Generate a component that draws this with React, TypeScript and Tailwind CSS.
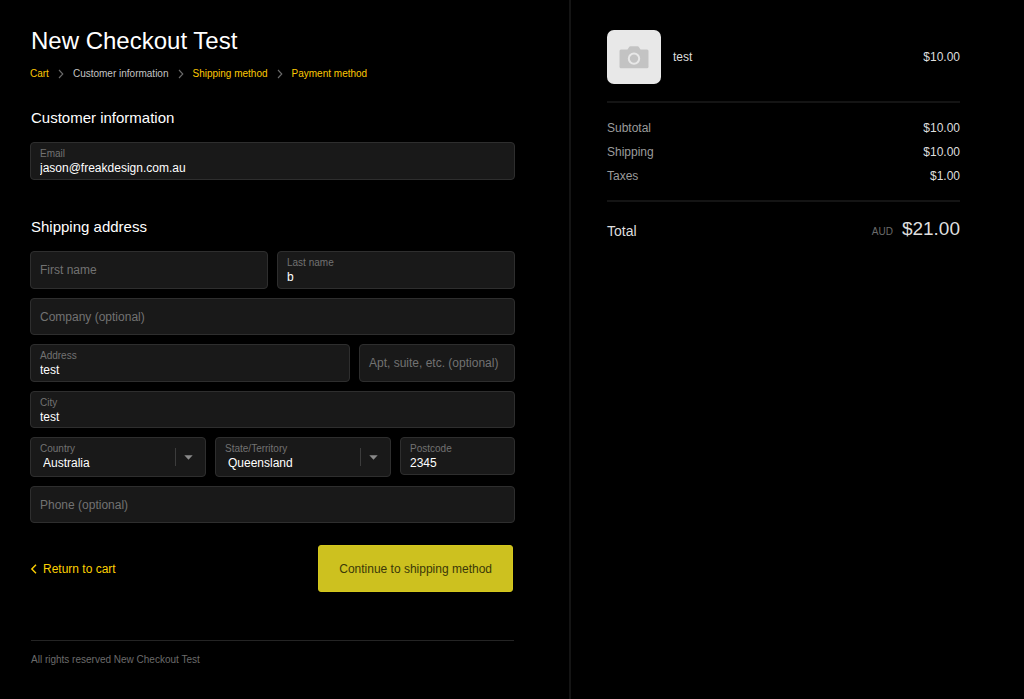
import { useState, type ReactNode } from "react";

const box = "relative flex flex-col rounded-[4px] border border-[#2e2e2e] bg-[#191919]";

type FieldProps = {
  id: string;
  label: string;
  initial?: string;
  type?: string;
  height?: string;
};

function Field({ id, label, initial = "", type = "text", height = "h-[38px]" }: FieldProps) {
  const [value, setValue] = useState(initial);
  const filled = value !== "";
  return (
    <div className={`${box} ${height} ${filled ? "pt-[5px]" : ""}`}>
      <label
        htmlFor={id}
        className={
          filled
            ? "px-[9px] text-[10px] leading-[12px] text-[#727272]"
            : "pointer-events-none absolute inset-0 flex items-center px-[9px] text-[12px] leading-4 whitespace-nowrap text-[#727272]"
        }
      >
        {label}
      </label>
      <input
        id={id}
        type={type}
        value={value}
        onChange={(e) => setValue(e.target.value)}
        className={`${filled ? "h-4" : "h-full"} block w-full min-w-0 bg-transparent px-[9px] text-[12px] leading-4 text-white outline-none`}
      />
    </div>
  );
}

function SelectField({ id, label, options }: { id: string; label: string; options: string[] }) {
  return (
    <div className={`${box} h-10 pt-[5px]`}>
      <label htmlFor={id} className="px-[9px] text-[10px] leading-[12px] text-[#727272]">
        {label}
      </label>
      <select
        id={id}
        className="block h-4 w-full appearance-none bg-transparent pr-8 pl-3 text-[12px] leading-4 text-white outline-none"
      >
        {options.map((o) => (
          <option key={o} className="bg-[#191919]">
            {o}
          </option>
        ))}
      </select>
      <span className="pointer-events-none absolute inset-y-0 right-3 flex items-center gap-2">
        <span className="h-[18px] w-px bg-[#3c3c3c]" />
        <svg width="9" height="5" viewBox="0 0 9 5" aria-hidden="true">
          <path d="M0.3 0.3H8.7L4.5 4.7Z" fill="#8a8a8a" />
        </svg>
      </span>
    </div>
  );
}

function Separator() {
  return (
    <svg width="6" height="10" viewBox="0 0 6 10" fill="none" aria-hidden="true">
      <path d="M1 1L4.8 5L1 9" stroke="#6b6b6b" strokeWidth="1.1" />
    </svg>
  );
}

function Crumb({ children }: { children: ReactNode }) {
  return (
    <a href="#" className="text-[#fdc803]">
      {children}
    </a>
  );
}

function Heading({ children }: { children: ReactNode }) {
  return <h2 className="px-px text-[15px] leading-5 text-white">{children}</h2>;
}

function PriceRow({ label, price }: { label: string; price: string }) {
  return (
    <div className="flex justify-between">
      <dt className="text-[#9b9b9b]">{label}</dt>
      <dd className="text-[#dedede]">{price}</dd>
    </div>
  );
}

export default function App() {
  return (
    <div className="grid min-h-screen grid-cols-[571fr_453fr] bg-black font-['Liberation_Sans',Arial,sans-serif] text-[12px]">
      <main className="border-r-2 border-[#141414] pt-[26px] pr-[54px] pl-[30px]">
        <header>
          <h1 className="px-px text-[24px] leading-[30px] text-white">New Checkout Test</h1>
          <nav
            aria-label="Breadcrumb"
            className="mt-[10px] flex items-center gap-[9px] text-[10px] leading-4 whitespace-nowrap"
          >
            <Crumb>Cart</Crumb>
            <Separator />
            <span className="text-[#c4c4c4]">Customer information</span>
            <Separator />
            <Crumb>Shipping method</Crumb>
            <Separator />
            <Crumb>Payment method</Crumb>
          </nav>
        </header>

        <form onSubmit={(e) => e.preventDefault()}>
          <section className="mt-[26px]">
            <Heading>Customer information</Heading>
            <div className="mt-[14px]">
              <Field id="email" label="Email" type="email" initial="jason@freakdesign.com.au" />
            </div>
          </section>

          <section className="mt-[37px]">
            <Heading>Shipping address</Heading>
            <div className="mt-[14px] grid gap-[9px]">
              <div className="grid grid-cols-2 gap-[9px]">
                <Field id="first" label="First name" />
                <Field id="last" label="Last name" initial="b" />
              </div>
              <Field id="company" label="Company (optional)" height="h-[37px]" />
              <div className="grid grid-cols-[320fr_156fr] gap-[9px]">
                <Field id="address" label="Address" initial="test" />
                <Field id="apt" label="Apt, suite, etc. (optional)" />
              </div>
              <Field id="city" label="City" initial="test" height="h-[37px]" />
              <div className="grid grid-cols-[176fr_176fr_115fr] items-start gap-[9px]">
                <SelectField id="country" label="Country" options={["Australia", "New Zealand"]} />
                <SelectField
                  id="state"
                  label="State/Territory"
                  options={["Queensland", "New South Wales", "Victoria"]}
                />
                <Field id="postcode" label="Postcode" initial="2345" />
              </div>
              <Field id="phone" label="Phone (optional)" type="tel" height="h-[37px]" />
            </div>
          </section>

          <div className="mt-[22px] flex items-center justify-between pr-0.5">
            <a href="#" className="flex items-center gap-[5px] text-[#fdd003]">
              <svg width="8" height="10" viewBox="0 0 8 10" fill="none" aria-hidden="true">
                <path d="M6 0.8L1.8 5L6 9.2" stroke="currentColor" strokeWidth="1.4" />
              </svg>
              Return to cart
            </a>
            <button
              type="submit"
              className="h-[47px] rounded-[3px] border border-[#d3c71c] bg-[#cdc11f] px-5 text-[12px] text-[#3b3808]"
            >
              Continue to shipping method
            </button>
          </div>
        </form>

        <footer className="mx-px mt-12 border-t border-[#242424] pt-[11px] text-[10px] leading-4 text-[#6b6b6b]">
          All rights reserved New Checkout Test
        </footer>
      </main>

      <aside aria-label="Order summary" className="pt-[30px] pr-16 pl-9">
        <div className="flex items-center border-b-2 border-[#141414] pb-[17px] text-[#dedede]">
          <div className="flex size-[54px] items-center justify-center rounded-[7px] bg-[#e8e8e8]">
            <svg width="30" height="23" viewBox="0 0 30 23" aria-hidden="true">
              <path
                d="M2 3.5H8.5L10 1.2Q10.5 0.3 11.5 0.3H18.5Q19.5 0.3 20 1.2L21.5 3.5H28Q29.5 3.5 29.5 5V20.8Q29.5 22.3 28 22.3H2Q0.5 22.3 0.5 20.8V5Q0.5 3.5 2 3.5Z"
                fill="#c3c3c3"
              />
              <circle cx="15" cy="12.6" r="5.2" fill="#c3c3c3" stroke="#e8e8e8" strokeWidth="2" />
            </svg>
          </div>
          <span className="ml-3">test</span>
          <span className="ml-auto">$10.00</span>
        </div>

        <dl className="flex flex-col gap-2 border-b-2 border-[#141414] pt-[17px] pb-4 leading-4">
          <PriceRow label="Subtotal" price="$10.00" />
          <PriceRow label="Shipping" price="$10.00" />
          <PriceRow label="Taxes" price="$1.00" />
        </dl>

        <div className="flex items-center pt-[15px] leading-6 text-[#dedede]">
          <span className="text-[14px]">Total</span>
          <span className="ml-auto flex items-baseline gap-[9px]">
            <span className="text-[10px] text-[#6b6b6b]">AUD</span>
            <span className="text-[19px]">$21.00</span>
          </span>
        </div>
      </aside>
    </div>
  );
}
